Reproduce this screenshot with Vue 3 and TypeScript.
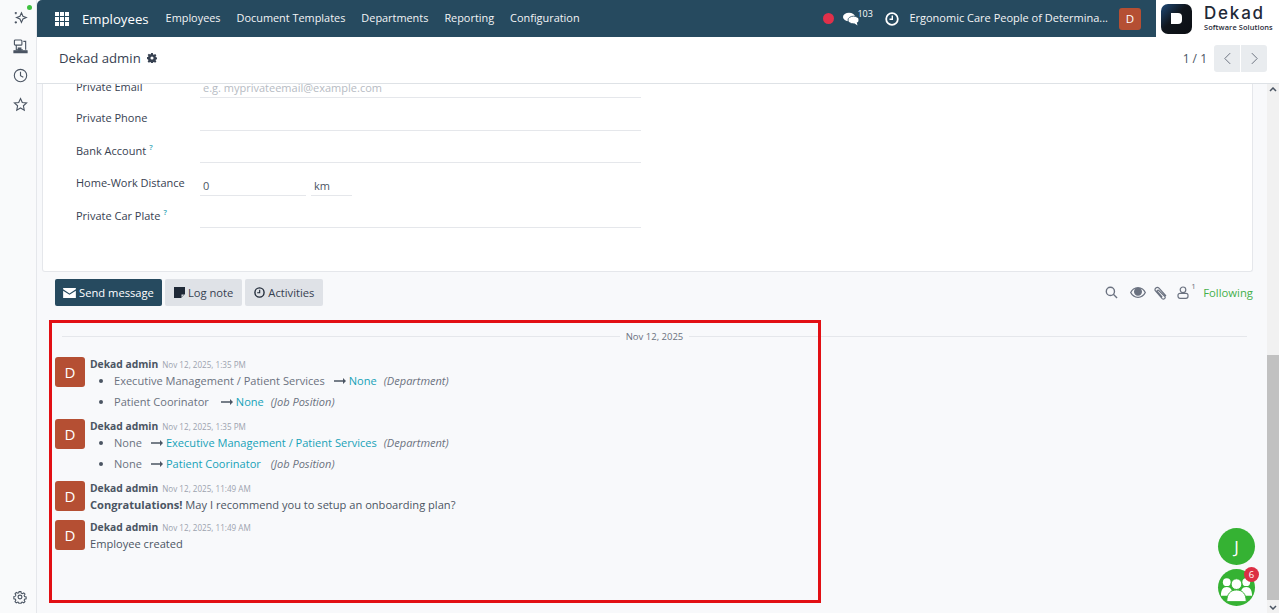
<script setup lang="ts">
interface Field {
  label: string
  help?: boolean
  placeholder?: string
}

interface Change {
  from: string
  to: string
  field: string
}

interface Message {
  time: string
  changes?: Change[]
  lead?: string
  body?: string
}

const menus = ['Employees', 'Document Templates', 'Departments', 'Reporting', 'Configuration']

const fields: Field[] = [
  { label: 'Private Email', placeholder: 'e.g. myprivateemail@example.com' },
  { label: 'Private Phone' },
  { label: 'Bank Account', help: true },
  { label: 'Home-Work Distance' },
  { label: 'Private Car Plate', help: true },
]

const JOB = 'Patient Coorinator'

const messages: Message[] = [
  {
    time: 'Nov 12, 2025, 1:35 PM',
    changes: [
      { from: 'Executive Management / Patient Services', to: 'None', field: 'Department' },
      { from: JOB, to: 'None', field: 'Job Position' },
    ],
  },
  {
    time: 'Nov 12, 2025, 1:35 PM',
    changes: [
      { from: 'None', to: 'Executive Management / Patient Services', field: 'Department' },
      { from: 'None', to: JOB, field: 'Job Position' },
    ],
  },
  {
    time: 'Nov 12, 2025, 11:49 AM',
    lead: 'Congratulations!',
    body: ' May I recommend you to setup an onboarding plan?',
  },
  { time: 'Nov 12, 2025, 11:49 AM', body: 'Employee created' },
]
</script>

<template>
  <div class="app">
    <aside class="rail">
      <span class="rail-item spark">
        <svg viewBox="0 0 16 16" width="15" height="15" fill="none" stroke="#4b5563" stroke-width="1.2">
          <path d="M9 3 L10.6 6.6 L14.2 8 L10.6 9.6 L9 13.2 L7.4 9.6 L3.8 8 L7.4 6.6 Z" />
          <path d="M3 2v2.4M1.8 3.2h2.4M3 12v2.4M1.8 13.2h2.4" />
        </svg>
        <i class="online"></i>
      </span>
      <span class="rail-item">
        <svg viewBox="0 0 16 16" width="15" height="15" fill="none" stroke="#4b5563" stroke-width="1.2">
          <rect x="1.5" y="1" width="8" height="5.5" rx="1" />
          <path d="M11 2.500h2.500v9M3.500 6.500v5h7" />
          <path d="M1 12.500h14v2H1z" fill="#4b5563" />
          <path d="M5 9h4v3.500H5z" fill="#4b5563" stroke="none" />
        </svg>
      </span>
      <span class="rail-item">
        <svg viewBox="0 0 16 16" width="15" height="15" fill="none" stroke="#4b5563" stroke-width="1.2">
          <circle cx="8" cy="8" r="6.6" />
          <path d="M8 4v4.2l3 1.6" />
        </svg>
      </span>
      <span class="rail-item">
        <svg viewBox="0 0 16 16" width="15" height="15" fill="none" stroke="#4b5563" stroke-width="1.2">
          <path d="M8 1.6 L9.9 5.8 L14.5 6.3 L11.1 9.4 L12 14 L8 11.7 L4 14 L4.9 9.4 L1.5 6.3 L6.1 5.8 Z" />
        </svg>
      </span>
      <span class="rail-gear">
        <svg viewBox="0 0 16 16" width="14" height="14" fill="none" stroke="#4b5563" stroke-width="1.3">
          <circle cx="8" cy="8" r="2.2" />
          <path d="M6.9 1.5h2.2l.4 1.9 1.3.6 1.7-1 1.5 1.6-1 1.6.5 1.3 1.9.5v2.1l-1.9.5-.5 1.3 1 1.6-1.5 1.6-1.7-1-1.3.5-.4 1.9H6.900l-.4-1.900-1.300-.5-1.700 1-1.500-1.600 1-1.600-.5-1.300-1.900-.5V7.500l1.900-.5.5-1.300-1-1.600L3.500 2.500l1.700 1 1.300-.6z" transform="translate(0.4 0.4) scale(0.95)" />
        </svg>
      </span>
    </aside>

    <div class="main">
      <header class="navbar">
        <svg class="apps" viewBox="0 0 14 14" width="14" height="14" fill="#fff">
          <rect x="0" y="0" width="4" height="4" /><rect x="5" y="0" width="4" height="4" /><rect x="10" y="0" width="4" height="4" />
          <rect x="0" y="5" width="4" height="4" /><rect x="5" y="5" width="4" height="4" /><rect x="10" y="5" width="4" height="4" />
          <rect x="0" y="10" width="4" height="4" /><rect x="5" y="10" width="4" height="4" /><rect x="10" y="10" width="4" height="4" />
        </svg>
        <span class="brand">Employees</span>
        <nav class="menus">
          <span v-for="m in menus" :key="m">{{ m }}</span>
        </nav>
        <div class="systray">
          <i class="rec"></i>
          <span class="chat">
            <svg viewBox="0 0 16 14" width="16" height="14" fill="#fff">
              <ellipse cx="6" cy="5" rx="6" ry="4.200" />
              <ellipse cx="10.500" cy="8" rx="5.500" ry="3.800" stroke="#264a5f" stroke-width="0.8" />
              <path d="M11 11l3.500 2.500-.8-3.500z" />
            </svg>
            <sup>103</sup>
          </span>
          <svg class="clock" viewBox="0 0 14 14" width="14" height="14" fill="none" stroke="#fff" stroke-width="1.800">
            <circle cx="7" cy="7" r="5.800" />
            <path d="M7.300 3.500v3.800H4.500" stroke-width="1.400" />
          </svg>
          <span class="company">Ergonomic Care People of Determina...</span>
          <span class="nav-avatar">D</span>
        </div>
        <div class="logo">
          <span class="logo-mark"><i></i></span>
          <span class="logo-text">
            <b>Dekad</b>
            <small>Software Solutions</small>
          </span>
        </div>
      </header>

      <div class="control">
        <span class="record">Dekad admin</span>
        <svg viewBox="0 0 16 16" width="10" height="10" fill="#374151">
          <path d="M6.600 0h2.800l.4 2.200 1.300.6 1.900-1.300 2 2-1.300 1.900.6 1.300 2.200.4v2.800l-2.200.4-.6 1.300 1.300 1.900-2 2-1.900-1.300-1.300.6-.4 2.200H6.600l-.4-2.200-1.300-.6-1.900 1.300-2-2 1.300-1.900-.6-1.300L-.5 9.400V6.600l2.200-.4.600-1.300L1 3l2-2 1.900 1.300 1.300-.6zM8 5.500a2.500 2.500 0 1 0 0 5 2.500 2.500 0 0 0 0-5z" />
        </svg>
        <div class="pager">
          <span class="count">1 / 1</span>
          <span class="pager-btns">
            <button type="button">
              <svg viewBox="0 0 10 14" width="9" height="13" fill="none" stroke="#6b7280" stroke-width="1.100"><path d="M8 1L2 7l6 6" /></svg>
            </button>
            <button type="button">
              <svg viewBox="0 0 10 14" width="9" height="13" fill="none" stroke="#6b7280" stroke-width="1.100"><path d="M2 1l6 6-6 6" /></svg>
            </button>
          </span>
        </div>
      </div>

      <div class="content">
        <div class="scroller">
          <section class="sheet">
            <div v-for="f in fields" :key="f.label" class="row">
              <label>{{ f.label }}<sup v-if="f.help" class="help">?</sup></label>
              <div v-if="f.label === 'Home-Work Distance'" class="distance">
                <span class="num">0</span>
                <span class="unit">km</span>
              </div>
              <div v-else class="input">{{ f.placeholder }}</div>
            </div>
          </section>

          <div class="chatter-bar">
            <button type="button" class="btn primary">
              <svg viewBox="0 0 14 11" width="13" height="10" fill="#fff">
                <path d="M0 0h14v1.500L7 6 0 1.500zM0 3l7 4.500L14 3v8H0z" />
              </svg>
              Send message
            </button>
            <button type="button" class="btn">
              <svg viewBox="0 0 11 11" width="11" height="11" fill="#1f2937">
                <path d="M0 0h11v7L7 11H0zM7.500 7.500V10l2.500-2.500z" />
              </svg>
              Log note
            </button>
            <button type="button" class="btn">
              <svg viewBox="0 0 12 12" width="11" height="11" fill="none" stroke="#1f2937" stroke-width="1.500">
                <circle cx="6" cy="6" r="5" />
                <path d="M6.200 3v3.300H3.500" stroke-width="1.200" />
              </svg>
              Activities
            </button>
            <div class="tools">
              <svg viewBox="0 0 14 14" width="13" height="13" fill="none" stroke="#6b7280" stroke-width="1.500">
                <circle cx="5.800" cy="5.800" r="4.400" />
                <path d="M9 9l4 4" />
              </svg>
              <svg class="eye" viewBox="0 0 16 11" width="16" height="11" fill="#6b7280">
                <path d="M8 0C4.500 0 1.500 2.200 0 5.500 1.500 8.800 4.500 11 8 11s6.500-2.200 8-5.500C14.500 2.200 11.500 0 8 0zm0 9.800c-2.800 0-5.200-1.700-6.600-4.300C2.400 3.700 3.800 2.300 5.500 1.600a4 4 0 1 0 5 0c1.700.7 3.100 2.100 4.100 3.900-1.400 2.600-3.800 4.300-6.600 4.300z" />
              </svg>
              <svg class="clip" viewBox="0 0 14 14" width="14" height="14" fill="none" stroke="#6b7280" stroke-width="1.200">
                <path d="M13 10L6 2.200a2.200 2.200 0 0 0-3.300 3l6.500 7.400a1.700 1.700 0 0 0 2.500-2.300L5.500 4.300a.9.900 0 0 0-1.300 1.200l5 5.700" />
              </svg>
              <span class="followers">
                <svg viewBox="0 0 12 13" width="12" height="13" fill="none" stroke="#6b7280" stroke-width="1.200">
                  <circle cx="6" cy="3.800" r="2.800" />
                  <rect x="1" y="7.300" width="10" height="5" rx="2" />
                </svg>
                <sup>1</sup>
              </span>
              <span class="following">Following</span>
            </div>
          </div>

          <div class="thread">
            <div class="date-sep"><span>Nov 12, 2025</span></div>
            <article v-for="(msg, i) in messages" :key="i" class="message">
              <span class="avatar">D</span>
              <div class="msg-body">
                <div class="msg-head"><b>Dekad admin</b><small>{{ msg.time }}</small></div>
                <ul v-if="msg.changes">
                  <li v-for="c in msg.changes" :key="c.field">
                    <span class="old">{{ c.from }}</span>
                    <span class="arrow" :class="{ wide: c.from === JOB }">
                      <svg viewBox="0 0 12 6" width="12" height="6" fill="#4b5563"><path d="M0 2.300h9V0l3 3-3 3V3.700H0z" /></svg>
                    </span>
                    <span class="new">{{ c.to }}</span>
                    <em :class="{ wide: c.to === JOB }">({{ c.field }})</em>
                  </li>
                </ul>
                <p v-else><strong v-if="msg.lead">{{ msg.lead }}</strong>{{ msg.body }}</p>
              </div>
            </article>
          </div>
        </div>

        <div class="scrollbar">
          <svg viewBox="0 0 8 5" width="8" height="5" fill="none" stroke="#4b5563" stroke-width="1.500"><path d="M1 4l3-3 3 3" /></svg>
          <div class="track"><div class="thumb"></div></div>
          <svg viewBox="0 0 8 5" width="8" height="5" fill="none" stroke="#4b5563" stroke-width="1.500"><path d="M1 1l3 3 3-3" /></svg>
        </div>
      </div>
    </div>

    <div class="highlight"></div>

    <div class="fab fab-j">J</div>
    <div class="fab fab-team">
      <svg viewBox="0 0 38 38" width="38" height="38" fill="#fff">
        <circle cx="9" cy="13" r="4" />
        <circle cx="29" cy="13" r="4" />
        <path d="M3 27c0-6 2-9 6-9s6 3 6 9zM23 27c0-6 2-9 6-9s6 3 6 9z" />
        <circle cx="19" cy="15" r="5.500" stroke="#35b233" stroke-width="1" />
        <path d="M9 33c0-8 4-12 10-12s10 4 10 12z" stroke="#35b233" stroke-width="1" />
      </svg>
      <span class="badge">6</span>
    </div>
  </div>
</template>

<style>
html, body { margin: 0; height: 100%; overflow: hidden; }
</style>

<style scoped>
.app {
  position: relative;
  display: flex;
  width: 1279px;
  height: 613px;
  overflow: hidden;
  background: #f9fafb;
  font-family: "Open Sans", "Noto Sans", sans-serif;
  font-size: 11px;
  color: #374151;
}

.rail {
  width: 37px;
  flex: none;
  display: flex;
  flex-direction: column;
  align-items: center;
  padding: 10px 0 0 4px;
  box-sizing: border-box;
  gap: 14px;
  background: #f9fafb;
  border-right: 1px solid #e5e7eb;
}
.rail-item { position: relative; display: flex; height: 15px; }
.online {
  position: absolute;
  top: -5px;
  right: -4px;
  width: 5px;
  height: 5px;
  border-radius: 50%;
  background: #3fc13f;
}
.rail-gear { margin-top: auto; margin-bottom: 9px; display: flex; }

.main { flex: 1; min-width: 0; display: flex; flex-direction: column; }

.navbar {
  height: 37px;
  flex: none;
  display: flex;
  align-items: center;
  background: #264a5f;
  border-top-left-radius: 5px;
  padding-left: 18px;
  color: #fff;
  box-sizing: border-box;
}
.apps { flex: none; }
.brand { font-size: 13.200px; margin-left: 13px; }
.menus { display: flex; gap: 16px; margin: 0 0 2px 17px; font-size: 10.900px; color: #f3f4f6; }
.systray { margin-left: auto; display: flex; align-items: center; }
.rec { width: 11px; height: 11px; border-radius: 50%; background: #e0304a; }
.chat { display: flex; margin-left: 9px; width: 42px; position: relative; }
.chat sup { position: absolute; left: 14px; top: -3px; font-size: 9px; line-height: 1; }
.company { margin: 0 0 2px 10px; font-size: 11px; color: #f3f4f6; }
.nav-avatar {
  margin-left: 11px;
  width: 22px;
  height: 22px;
  border-radius: 3px;
  background: #b54f33;
  display: flex;
  align-items: center;
  justify-content: center;
  font-size: 11.500px;
}
.logo {
  width: 123px;
  height: 37px;
  margin-left: 15px;
  flex: none;
  background: #fff;
  display: flex;
  align-items: center;
  color: #1f2937;
  padding-left: 5px;
  box-sizing: border-box;
  gap: 12px;
}
.logo-mark {
  width: 31px;
  height: 30px;
  border-radius: 7px;
  background: linear-gradient(135deg, #1e4a78 0%, #10151c 45%, #0b0e13 100%);
  display: flex;
  align-items: center;
  justify-content: center;
}
.logo-mark i { width: 11px; height: 11px; background: #fff; border-radius: 0 4px 4px 0; }
.logo-text { display: flex; flex-direction: column; line-height: 1; }
.logo-text b { font-weight: 500; font-size: 17px; letter-spacing: 1.800px; font-family: Inter, sans-serif; margin-bottom: 2px; }
.logo-text small { font-size: 7.400px; font-weight: 600; white-space: nowrap; letter-spacing: .1px; }

.control {
  height: 47px;
  flex: none;
  display: flex;
  align-items: center;
  gap: 6px;
  padding: 0 12px 4px 22px;
  background: #fff;
  border-bottom: 1px solid #dee2e6;
  box-sizing: border-box;
}
.record { font-size: 13.200px; color: #374151; }
.pager { margin-left: auto; display: flex; align-items: center; gap: 7px; }
.count { font-size: 12px; color: #4b5563; }
.pager-btns { display: flex; gap: 1px; }
.pager-btns button {
  width: 26px;
  height: 27px;
  padding: 0;
  border: 0;
  background: #e9ecef;
  display: flex;
  align-items: center;
  justify-content: center;
}
.pager-btns button:first-child { border-radius: 3px 0 0 3px; }
.pager-btns button:last-child { border-radius: 0 3px 3px 0; }

.content { flex: 1; min-height: 0; display: flex; background: #f8f9fb; }
.scroller { flex: 1; min-width: 0; overflow: hidden; padding: 0 14px 0 5px; }

.sheet {
  height: 188px;
  background: #fff;
  border: 1px solid #e5e7eb;
  border-top: 0;
  border-radius: 0 0 3px 3px;
  padding-left: 33px;
  box-sizing: border-box;
}
.row { display: flex; height: 32.500px; align-items: flex-start; }
.row:first-child { height: 14px; overflow: hidden; }
.row label { width: 124px; flex: none; line-height: 15px; color: #374151; font-size: 11px; padding-top: 12px; }
.row:first-child label { padding-top: 0; margin-top: -5px; }
.help { color: #3aa7b8; font-size: 7.500px; margin-left: 3px; line-height: 0; font-weight: 600; }
.input {
  width: 441px;
  height: 32.500px;
  box-sizing: border-box;
  border-bottom: 1px solid #e5e7eb;
  color: #b6bbc3;
  font-size: 11px;
  padding-left: 3px;
}
.row:first-child .input { height: 14px; line-height: 8px; }
.distance { display: flex; gap: 5px; height: 32.500px; align-items: flex-end; }
.num, .unit { display: block; height: 20px; line-height: 20px; border-bottom: 1px solid #e5e7eb; padding-left: 3px; box-sizing: border-box; font-size: 11px; color: #4b5563; }
.num { width: 106px; }
.unit { width: 41px; }

.chatter-bar { display: flex; align-items: center; gap: 3px; height: 27px; margin-top: 7px; padding: 0 0 0 13px; }
.btn {
  height: 27px;
  display: flex;
  align-items: center;
  gap: 3px;
  padding: 0 9px;
  border: 0;
  border-radius: 2px;
  background: #dfe2e7;
  color: #374151;
  font: inherit;
  font-size: 11.200px;
}
.btn.primary { background: #264a5f; color: #fff; padding: 0 8px; }
.tools { margin-left: auto; display: flex; align-items: center; color: #6b7280; }
.eye { margin-left: 12px; }
.clip { margin-left: 7px; }
.followers { display: flex; margin-left: 10px; position: relative; width: 21px; }
.followers sup { position: absolute; left: 14px; top: -4px; font-size: 8px; line-height: 1; color: #6b7280; }
.following { margin-left: 5px; color: #44b04a; font-size: 11.300px; }

.thread { padding: 0 0 0 13px; }
.date-sep {
  display: flex;
  align-items: center;
  gap: 6px;
  height: 16px;
  margin: 22px 6px 13px 7px;
  font-size: 9.500px;
  color: #6b7280;
}
.date-sep::before, .date-sep::after { content: ''; flex: 1; height: 1px; background: #e5e7eb; }
.message { display: flex; gap: 5px; margin-bottom: 5.500px; }
.avatar {
  width: 30px;
  height: 30px;
  flex: none;
  border-radius: 3px;
  background: #b54f33;
  color: #fff;
  font-size: 15px;
  display: flex;
  align-items: center;
  justify-content: center;
}
.msg-body { flex: 1; min-width: 0; }
.msg-head { display: flex; align-items: baseline; gap: 4px; line-height: 14px; }
.msg-head b { font-size: 10.300px; font-weight: 700; color: #4b5563; }
.msg-head small { font-size: 8.100px; color: #9ca3af; }
.msg-body p { margin: -0.500px 0 2px; line-height: 17px; font-size: 11.100px; color: #4b5563; }
.msg-body p strong { font-weight: 700; }
ul { margin: -0.500px 0 3px; padding: 0 0 0 24px; font-size: 11.050px; color: #6b7280; }
li { line-height: 17px; margin-bottom: 4px; }
li::marker { color: #4b5563; }
.old { color: #6b7280; }
.arrow { display: inline-flex; margin: 0 3px 0 9px; vertical-align: 1px; }
.arrow.wide { margin-left: 12px; }
.new { color: #17a2b8; }
em { margin-left: 7px; font-style: italic; color: #6b7280; }
em.wide { margin-left: 10px; }

.scrollbar {
  width: 12px;
  flex: none;
  display: flex;
  flex-direction: column;
  align-items: center;
  background: #f1f1f1;
  padding: 3px 0;
  box-sizing: border-box;
}
.track { flex: 1; width: 12px; display: flex; align-items: flex-end; margin: 3px 0 5px; }
.thumb { width: 12px; height: 245px; background: #c1c1c1; }

.highlight {
  position: absolute;
  left: 49px;
  top: 320px;
  width: 772px;
  height: 283px;
  border: 3px solid #e20f14;
  box-sizing: border-box;
  pointer-events: none;
}

.fab {
  position: absolute;
  left: 1218px;
  width: 37px;
  height: 37px;
  border-radius: 50%;
  background: #35b233;
  color: #fff;
  display: flex;
  align-items: center;
  justify-content: center;
}
.fab-j { top: 528px; font-size: 17px; }
.fab-team { top: 569px; overflow: visible; }
.badge {
  position: absolute;
  right: -4px;
  top: -2px;
  width: 15px;
  height: 15px;
  border-radius: 50%;
  background: #dc2f44;
  font-size: 9.500px;
  display: flex;
  align-items: center;
  justify-content: center;
}
</style>
